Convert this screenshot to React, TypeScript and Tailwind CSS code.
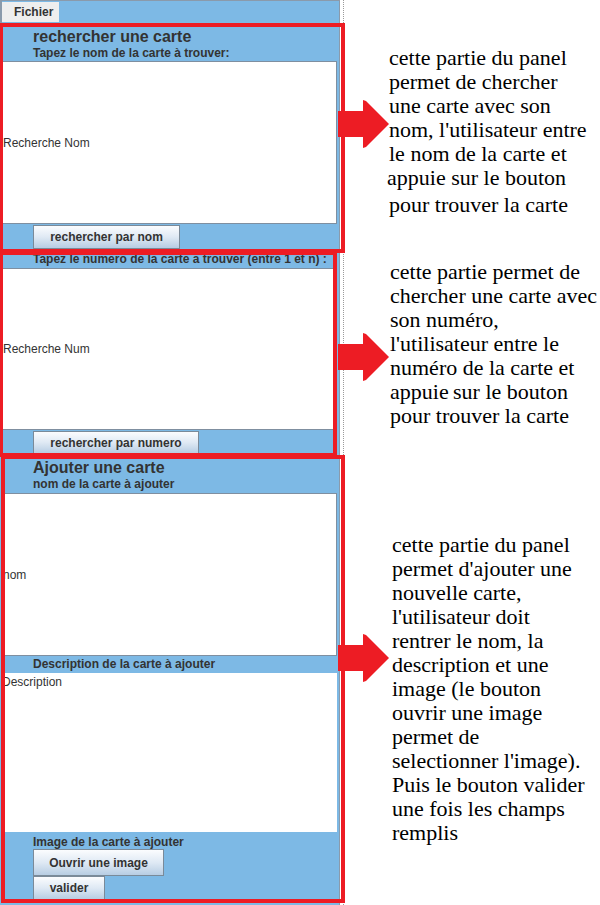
import React from 'react'

const blue = 'bg-[#7db9e5]'

function SwingButton({ label, className }: { label: string; className: string }) {
  return (
    <div
      className={`flex items-center justify-center border border-[#7a8a99] bg-linear-to-b from-[#fbfcfe] via-[#dfe9f4] to-[#b7cde3] text-[12px] font-bold text-[#333] ${className}`}
    >
      {label}
    </div>
  )
}

function TextArea({ label, className, top }: { label: string; className: string; top?: boolean }) {
  return (
    <div className={`mx-[2px] flex bg-white ${top ? 'items-start' : 'items-center'} ${className}`}>
      <span className="text-[12px] leading-[14px] text-[#333]">{label}</span>
    </div>
  )
}

function Arrow() {
  return (
    <svg width="51" height="48" viewBox="0 0 51 48" className="shrink-0">
      <rect x="0" y="11" width="26" height="26" fill="#ed1c24" />
      <polygon points="25,0 28,1 51,24 28,47 25,48" fill="#ed1c24" />
    </svg>
  )
}

const serif = "font-['Liberation_Serif',serif] text-[22px] leading-[24px] text-black whitespace-nowrap"

export default function App() {
  return (
    <div className="relative flex h-[905px] w-[600px] overflow-hidden bg-white font-['Liberation_Sans',Arial,sans-serif]">
      {/* application window */}
      <div className="w-[344px] shrink-0 border-r border-dotted border-[#9a9a9a]">
        <div className={`w-[340px] border-r border-[#8a9aab] ${blue} flex h-[905px] flex-col`}>
          {/* menu bar */}
          <div className="h-[24px] border-l-2 border-t border-[#8a9aab] pt-[1px]">
            <div className="flex h-[20px] w-[57px] items-center bg-[#eeeeee] pl-[12px] text-[12px] font-bold text-[#333]">
              Fichier
            </div>
          </div>

          {/* recherche par nom */}
          <div className="h-[37px] pl-[33px] pt-[4px] text-[#333]">
            <div className="text-[16px] font-bold leading-[18px]">rechercher une carte</div>
            <div className="text-[12px] font-bold leading-[14px]">Tapez le nom de la carte à trouver:</div>
          </div>
          <TextArea label="Recherche Nom" className="h-[163px] border border-[#7f8fa0]" />
          <div className="h-[26px] pl-[33px] pt-[1px]">
            <SwingButton label="rechercher par nom" className="h-[24px] w-[147px]" />
          </div>

          {/* recherche par numero */}
          <div className="h-[18px] pl-[33px] text-[12px] font-bold leading-[18px] text-[#333]">
            Tapez le numero de la carte a trouver (entre 1 et n) :
          </div>
          <TextArea label="Recherche Num" className="h-[162px] border border-[#7f8fa0]" />
          <div className="h-[26px] pl-[33px] pt-[1px]">
            <SwingButton label="rechercher par numero" className="h-[23px] w-[166px]" />
          </div>

          {/* ajout */}
          <div className="h-[37px] pl-[33px] pt-[3px] text-[#333]">
            <div className="text-[16px] font-bold leading-[18px]">Ajouter une carte</div>
            <div className="text-[12px] font-bold leading-[14px]">nom de la carte à ajouter</div>
          </div>
          <TextArea label="nom" className="h-[163px] border border-[#7f8fa0]" />
          <div className="h-[17px] pl-[33px] text-[12px] font-bold leading-[17px] text-[#333]">
            Description de la carte à ajouter
          </div>
          <TextArea label="Description" className="h-[159px] pt-[2px]" top />
          <div className="flex flex-col items-start pl-[33px] pt-[3px]">
            <div className="text-[12px] font-bold leading-[14px] text-[#333]">Image de la carte à ajouter</div>
            <SwingButton label="Ouvrir une image" className="h-[27px] w-[131px]" />
            <SwingButton label="valider" className="h-[24px] w-[72px]" />
          </div>
        </div>
      </div>

      {/* annotations */}
      <div className="-ml-[6px] flex flex-1 flex-col">
        <div className="flex h-[253px] items-start">
          <div className="mt-[100px]">
            <Arrow />
          </div>
          <div className={`mt-[46px] ${serif}`}>
            <div>cette partie du panel</div>
            <div>permet de chercher</div>
            <div>une carte avec son</div>
            <div>nom, l'utilisateur entre</div>
            <div>le nom de la carte et</div>
            <div className="-ml-[2px]">appuie sur le bouton</div>
            <div className="mt-[3px]">pour trouver la carte</div>
          </div>
        </div>
        <div className="flex h-[202px] items-start">
          <div className="mt-[80px]">
            <Arrow />
          </div>
          <div className={`mt-[7px] pl-[1px] ${serif}`}>
            <div>cette partie permet de</div>
            <div>chercher une carte avec</div>
            <div>son numéro,</div>
            <div>l'utilisateur entre le</div>
            <div>numéro de la carte et</div>
            <div>appuie{'\u2009'}sur le bouton</div>
            <div>pour trouver la carte</div>
          </div>
        </div>
        <div className="flex flex-1 items-start">
          <div className="mt-[179px]">
            <Arrow />
          </div>
          <div className={`mt-[78px] pl-[3px] ${serif}`}>
            <div>cette partie du panel</div>
            <div>permet d'ajouter une</div>
            <div>nouvelle carte,</div>
            <div>l'utilisateur doit</div>
            <div>rentrer le nom, la</div>
            <div>description et une</div>
            <div>image (le bouton</div>
            <div>ouvrir une image</div>
            <div>permet de</div>
            <div>selectionner l'image).</div>
            <div>Puis le bouton valider</div>
            <div>une fois les champs</div>
            <div>remplis</div>
          </div>
        </div>
      </div>

      {/* red highlight frames */}
      <div className="pointer-events-none absolute left-[-1px] top-[23px] h-[230px] w-[346px] border-[4px] border-[#ed1c24]" />
      <div className="pointer-events-none absolute left-[-1px] top-[251px] h-[206px] w-[338px] border-[4px] border-[#ed1c24]" />
      <div className="pointer-events-none absolute left-[1px] top-[455px] h-[448px] w-[344px] border-[4px] border-[#ed1c24]" />
    </div>
  )
}
